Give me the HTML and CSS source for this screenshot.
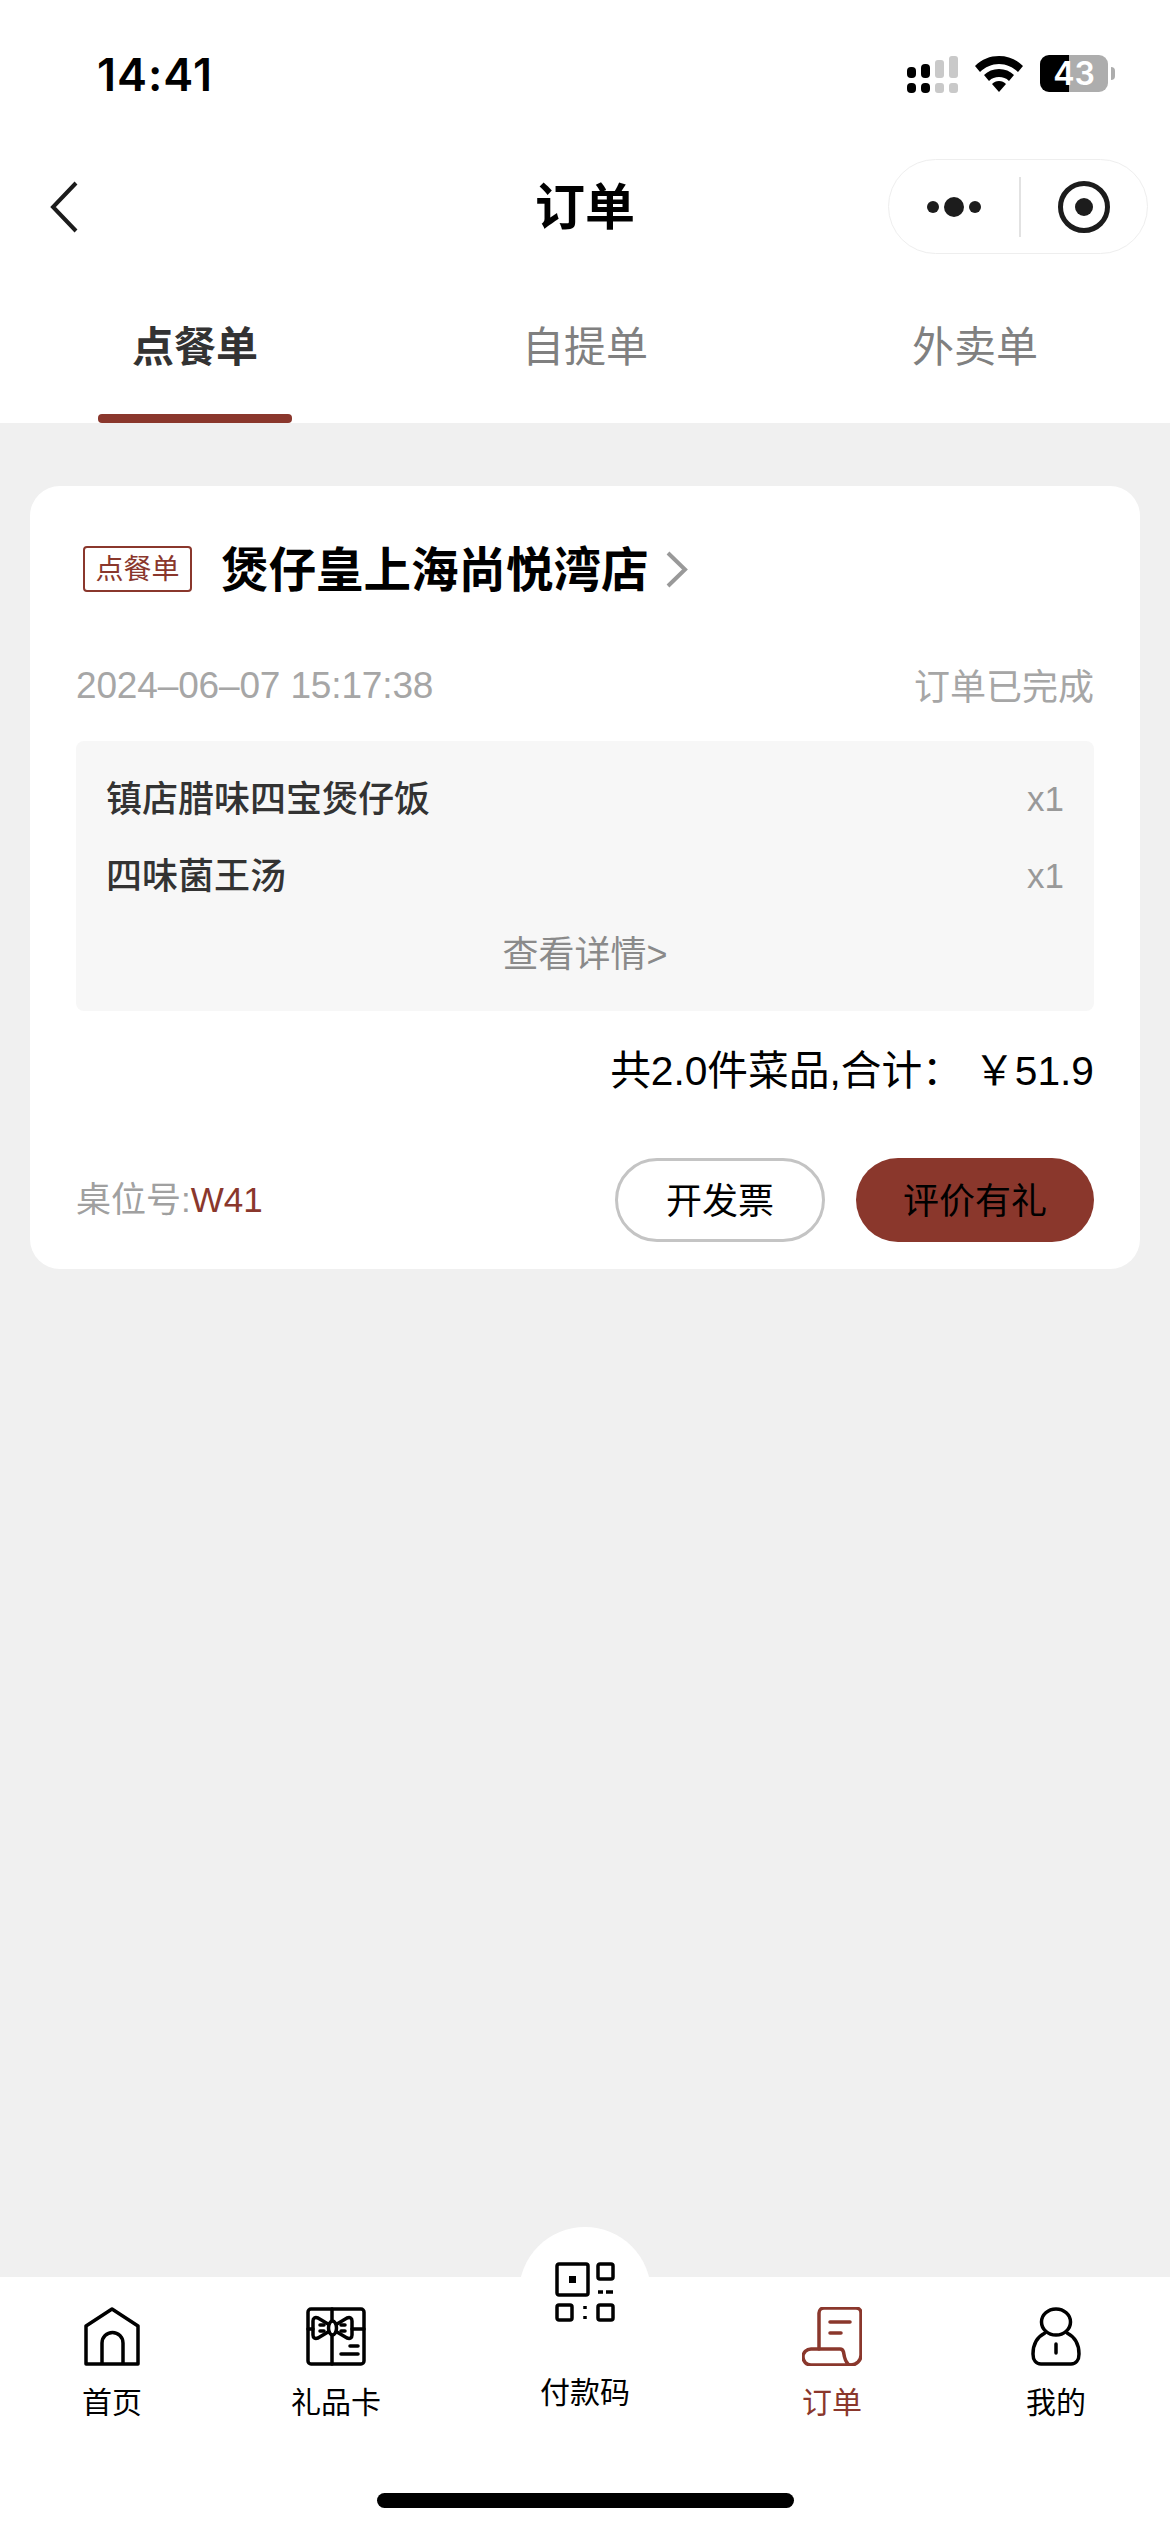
FILE: index.html
```html
<!DOCTYPE html>
<html lang="zh">
<head>
  <meta charset="utf-8">
  <title>订单</title>
  <link rel="stylesheet" href="styles.css">
</head>
<body>
  <div class="page">
    <header class="top">
      <div class="status-bar">
        <span class="time">14:41</span>
        <div class="status-icons">
          <svg class="signal" width="51" height="37" viewBox="0 0 51 37">
            <g fill="#000">
              <rect x="0" y="11" width="9" height="11" rx="4"/>
              <rect x="14" y="8" width="9" height="14" rx="4"/>
              <rect x="0" y="27" width="9" height="10" rx="4"/>
              <rect x="14" y="27" width="9" height="10" rx="4"/>
            </g>
            <g fill="#c9c9c9">
              <rect x="28" y="4" width="9" height="18" rx="3"/>
              <rect x="42" y="0" width="9" height="22" rx="3"/>
              <rect x="28" y="27" width="9" height="10" rx="3"/>
              <rect x="42" y="27" width="9" height="10" rx="3"/>
            </g>
          </svg>
          <svg class="wifi" width="48" height="36" viewBox="0 0 48 36">
            <path d="M24 0C15 0 7 3 0 10l5 6C10 11 17 8 24 8s14 3 19 8l5-6C41 3 33 0 24 0z"/>
            <path d="M24 13c-6 0-11 2-15 6l5 6c3-3 6-4 10-4s7 1 10 4l5-6c-4-4-9-6-15-6z"/>
            <path d="M24 25c-3 0-5 1-7 3l7 8 7-8c-2-2-4-3-7-3z"/>
          </svg>
          <div class="battery"><span class="battery-level">43</span><i class="battery-nub"></i></div>
        </div>
      </div>

      <div class="nav-bar">
        <svg class="back" width="28" height="52" viewBox="0 0 28 52">
          <path d="M26 2 3 26l23 24" fill="none" stroke="#1c1c1c" stroke-width="4"/>
        </svg>
        <h1 class="nav-title">订单</h1>
        <div class="capsule">
          <div class="capsule-more">
            <i class="dot"></i><i class="dot dot-big"></i><i class="dot"></i>
          </div>
          <i class="capsule-line"></i>
          <div class="capsule-close"><i></i></div>
        </div>
      </div>

      <nav class="tabs">
        <div class="tab tab-active">点餐单</div>
        <div class="tab">自提单</div>
        <div class="tab">外卖单</div>
      </nav>
    </header>

    <main class="content">
      <section class="card">
        <div class="shop-row">
          <span class="tag">点餐单</span>
          <span class="shop-name">煲仔皇上海尚悦湾店</span>
          <svg class="shop-arrow" width="23" height="37" viewBox="0 0 23 37">
            <path d="M3 2 20 18.500 3 35" fill="none" stroke="#999" stroke-width="4"/>
          </svg>
        </div>

        <div class="meta-row">
          <span class="order-time">2024–06–07 15:17:38</span>
          <span class="order-state">订单已完成</span>
        </div>

        <div class="dishes">
          <div class="dish"><span class="dish-name">镇店腊味四宝煲仔饭</span><span class="dish-num">x1</span></div>
          <div class="dish"><span class="dish-name">四味菌王汤</span><span class="dish-num">x1</span></div>
          <div class="more-link">查看详情&gt;</div>
        </div>

        <div class="total">共2.0件菜品,合计： ￥51.9</div>

        <div class="card-foot">
          <span class="table-no">桌位号:<em>W41</em></span>
          <div class="actions">
            <button class="btn btn-line">开发票</button>
            <button class="btn btn-main">评价有礼</button>
          </div>
        </div>
      </section>
    </main>

    <footer class="tabbar">
      <i class="pay-bump"></i>
      <div class="bar-item">
        <svg width="56" height="59" viewBox="0 0 56 59" fill="none" stroke="#000" stroke-width="3.5" stroke-linejoin="round">
          <path d="M2 57V19L28 2l26 17v38z"/>
          <path d="M18 57V36a10.500 10.500 0 0 1 21 0v21"/>
        </svg>
        <span class="bar-label">首页</span>
      </div>
      <div class="bar-item">
        <svg width="60" height="59" viewBox="0 0 60 59" fill="none" stroke="#000" stroke-width="3.5" stroke-linecap="round" stroke-linejoin="round">
          <rect x="2" y="2" width="56" height="55" rx="3"/>
          <path d="M26 2v12M26 28v29M2 22h5M46 22h12"/>
          <path d="M22 17 12 11c-3-1-5 0-5 3v14c0 3 2 4 5 3l10-6"/>
          <path d="M31 17l10-6c3-1 5 0 5 3v14c0 3-2 4-5 3l-10-6"/>
          <ellipse cx="26.500" cy="21" rx="4" ry="7"/>
          <path d="M14 18h4M14 24h4M35 18h4M35 24h4"/>
          <path d="M44 39h8M35 47h17"/>
        </svg>
        <span class="bar-label">礼品卡</span>
      </div>
      <div class="bar-item bar-pay">
        <svg width="60" height="60" viewBox="0 0 60 60" fill="none" stroke="#000" stroke-width="3.5" stroke-linejoin="round">
          <rect x="2" y="2" width="31" height="31" rx="2"/>
          <rect x="14" y="14" width="7" height="7" fill="#000" stroke="none"/>
          <rect x="43" y="2" width="15" height="15" rx="2"/>
          <path d="M43 30h5M51 30h7M30 44v3M30 54v3"/>
          <rect x="2" y="43" width="15" height="15" rx="2"/>
          <rect x="43" y="43" width="15" height="15" rx="2"/>
        </svg>
        <span class="bar-label">付款码</span>
      </div>
      <div class="bar-item bar-active">
        <svg width="60" height="59" viewBox="0 0 60 59" fill="none" stroke="#8a372c" stroke-width="3.5" stroke-linecap="round" stroke-linejoin="round">
          <path d="M17 42V6a5 5 0 0 1 5-5h32a5 5 0 0 1 5 5v42a10 10 0 0 1-10 10"/>
          <path d="M49 58H9a7.500 7.500 0 0 1 0-16h29c2 0 3 1 3.500 3 1 7 3.500 13 7.500 13z"/>
          <path d="M28 15h20M28 26h11"/>
        </svg>
        <span class="bar-label">订单</span>
      </div>
      <div class="bar-item">
        <svg width="50" height="59" viewBox="0 0 50 59" fill="none" stroke="#000" stroke-width="3.5" stroke-linecap="round" stroke-linejoin="round">
          <ellipse cx="25" cy="15" rx="14.500" ry="13"/>
          <path d="M14 26C6 30 2 38 2 47c0 6 3 10 8 10h30c5 0 8-4 8-10 0-9-4-17-12-21"/>
          <path d="M25 37v9"/>
        </svg>
        <span class="bar-label">我的</span>
      </div>
      <i class="home-indicator"></i>
    </footer>
  </div>
</body>
</html>
```

FILE: styles.css
```css
* {
  box-sizing: border-box;
}

body {
  margin: 0;
  background: #f0f0f0;
  font-family: "Liberation Sans", "Noto Sans CJK SC", sans-serif;
  color: #000;
}

.page {
  display: flex;
  flex-direction: column;
  width: 1170px;
  height: 2532px;
  overflow: hidden;
}

/* top area */
.top {
  background: #fff;
}

.status-bar {
  display: flex;
  justify-content: space-between;
  height: 159px;
  padding: 53px 62px 0 97px;
}

.time {
  font-family: Inter, sans-serif;
  font-size: 45px;
  font-weight: 600;
  letter-spacing: 1px;
  line-height: 44px;
}

.status-icons {
  display: flex;
  align-items: flex-start;
  padding-top: 2px;
}

.signal {
  margin-top: 1px;
}

.wifi {
  margin: 1px 17px 0 17px;
}

.battery {
  position: relative;
  width: 68px;
  height: 37px;
  border-radius: 9px;
  background: linear-gradient(90deg, #000 43%, #adadad 43%);
  color: #fff;
  font-family: Inter, sans-serif;
  font-size: 32px;
  font-weight: 600;
  line-height: 37px;
  text-align: center;
}

.battery-nub {
  position: absolute;
  top: 12px;
  right: -7px;
  width: 4px;
  height: 13px;
  border-radius: 0 6px 6px 0;
  background: #adadad;
}

.nav-bar {
  display: grid;
  grid-template-columns: 1fr auto 1fr;
  align-items: center;
  height: 95px;
  padding: 0 22px 0 50px;
}

.nav-title {
  margin: 2px 0 0;
  font-size: 50px;
  font-weight: 700;
  line-height: 60px;
  text-align: center;
  transform: translateX(-14px);
}

.capsule {
  display: flex;
  align-items: center;
  justify-self: end;
  width: 260px;
  height: 95px;
  border: 1.5px solid #eee;
  border-radius: 48px;
}

.capsule-more {
  display: flex;
  align-items: center;
  justify-content: center;
  gap: 5px;
  width: 130px;
}

.dot {
  width: 12px;
  height: 12px;
  border-radius: 50%;
  background: #1c1c1c;
}

.dot-big {
  width: 20px;
  height: 20px;
}

.capsule-line {
  width: 2px;
  height: 60px;
  background: #e2e2e2;
}

.capsule-close {
  display: flex;
  align-items: center;
  justify-content: center;
  flex: 1;
}

.capsule-close i {
  display: flex;
  align-items: center;
  justify-content: center;
  width: 52px;
  height: 52px;
  border: 5px solid #1c1c1c;
  border-radius: 50%;
}

.capsule-close i::after {
  content: "";
  width: 18px;
  height: 18px;
  border-radius: 50%;
  background: #1c1c1c;
}

.tabs {
  display: flex;
  height: 169px;
}

.tab {
  position: relative;
  flex: 1;
  padding-top: 68px;
  color: #808080;
  font-size: 42px;
  line-height: 52px;
  text-align: center;
}

.tab-active {
  color: #333;
  font-weight: 700;
}

.tab-active::after {
  content: "";
  position: absolute;
  bottom: 0;
  left: 98px;
  width: 194px;
  height: 9px;
  border-radius: 4px;
  background: #8a372c;
}

/* order card */
.content {
  flex: 1;
  padding: 63px 30px 0;
}

.card {
  padding: 60px 46px 27px;
  border-radius: 30px;
  background: #fff;
}

.shop-row {
  display: flex;
  align-items: center;
  height: 46px;
  padding-left: 7px;
}

.tag {
  width: 109px;
  height: 46px;
  border: 2px solid #8a372c;
  border-radius: 4px;
  color: #8a372c;
  font-size: 28px;
  line-height: 44px;
  text-align: center;
}

.shop-name {
  margin: 3px 0 0 29px;
  font-size: 47.5px;
  font-weight: 700;
  line-height: 60px;
  white-space: nowrap;
}

.shop-arrow {
  margin-left: 16px;
}

.meta-row {
  display: flex;
  align-items: center;
  justify-content: space-between;
  height: 40px;
  margin-top: 74px;
  color: #a6a6a6;
}

.order-time {
  font-size: 37px;
  letter-spacing: -0.15px;
}

.order-state {
  margin-bottom: 5px;
  font-size: 36px;
}

.dishes {
  height: 270px;
  margin-top: 35px;
  padding: 19px 30px 0;
  border-radius: 8px;
  background: #f7f7f7;
}

.dish {
  display: flex;
  align-items: center;
  justify-content: space-between;
  height: 77px;
}

.dish-name {
  margin-bottom: 6px;
  color: #333;
  font-size: 36px;
  font-weight: 500;
}

.dish-num {
  color: #999;
  font-size: 35px;
}

.more-link {
  height: 77px;
  padding-top: 2px;
  color: #8a8a8a;
  font-size: 36px;
  line-height: 77px;
  text-align: center;
}

.total {
  margin-top: 40px;
  font-size: 40.7px;
  line-height: 40px;
  text-align: right;
}

.card-foot {
  display: flex;
  align-items: center;
  justify-content: space-between;
  margin-top: 67px;
}

.table-no {
  margin-bottom: 7px;
  color: #a0a0a0;
  font-size: 35px;
}

.table-no em {
  color: #8a372c;
  font-style: normal;
}

.actions {
  display: flex;
  gap: 31px;
}

.btn {
  height: 84px;
  padding: 0 0 5px;
  border-radius: 42px;
  color: #000;
  font-family: inherit;
  font-size: 36px;
}

.btn-line {
  width: 210px;
  border: 3px solid #c4c4c4;
  background: #fff;
}

.btn-main {
  width: 238px;
  border: 0;
  background: #8a372c;
}

/* bottom bar */
.tabbar {
  position: relative;
  display: grid;
  grid-template-columns: 224px 224px 274px 220px 228px;
  height: 255px;
  padding-top: 30px;
  background: #fff;
}

.pay-bump {
  position: absolute;
  top: -50px;
  left: 519px;
  width: 132px;
  height: 132px;
  border-radius: 50%;
  background: #fff;
}

.bar-item {
  position: relative;
  display: flex;
  flex-direction: column;
  align-items: center;
}

.bar-label {
  margin-top: 22px;
  font-size: 30px;
  line-height: 30px;
}

.bar-pay {
  margin-top: -45px;
}

.bar-pay .bar-label {
  margin-top: 56px;
}

.bar-active .bar-label {
  color: #8a372c;
}

.home-indicator {
  position: absolute;
  bottom: 24px;
  left: 377px;
  width: 417px;
  height: 15px;
  border-radius: 8px;
  background: #000;
}
```
